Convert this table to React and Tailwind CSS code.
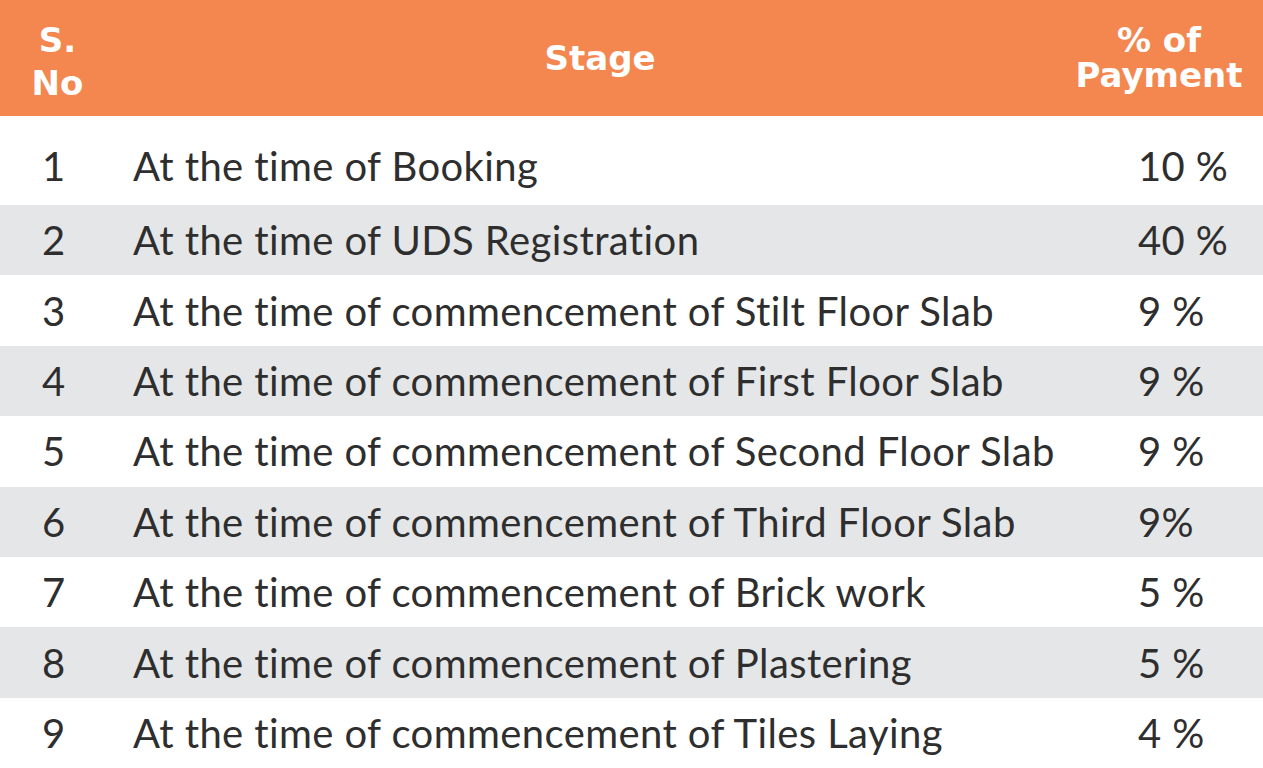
import React from 'react';

const rows = [
    ['1', 'At the time of Booking', '10 %'],
    ['2', 'At the time of UDS Registration', '40 %'],
    ['3', 'At the time of commencement of Stilt Floor Slab', '9 %'],
    ['4', 'At the time of commencement of First Floor Slab', '9 %'],
    ['5', 'At the time of commencement of Second Floor Slab', '9 %'],
    ['6', 'At the time of commencement of Third Floor Slab', '9%'],
    ['7', 'At the time of commencement of Brick work', '5 %'],
    ['8', 'At the time of commencement of Plastering', '5 %'],
    ['9', 'At the time of commencement of Tiles Laying', '4 %'],
];

const PaymentSchedule = () => {
    return (
        <div className="w-[1263px] h-[768px] overflow-hidden bg-white font-['Lato',sans-serif] text-[#2e2e2e]">
            {/* header */}
            <div className="grid grid-cols-[115px_1fr_178px] h-[116px] bg-[#f4874f] text-white font-['DejaVu_Sans',sans-serif] font-bold text-[34px]">
                <div className="flex items-center justify-center text-center leading-[43px] pt-[8px]">S.<br />No</div>
                <div className="flex items-center justify-center">Stage</div>
                <div className="flex items-center justify-center text-center leading-[35px] pr-[30px]">% of<br />Payment</div>
            </div>

            {rows.map(([no, stage, pct], i) => (
                <div
                    key={no}
                    className={`grid grid-cols-[115px_1fr_178px] items-center text-[40px] leading-none tracking-[0.4px] ${i === 0 ? 'h-[89px] pt-[10px]' : 'h-[70.4px]'} ${i % 2 === 1 ? 'bg-[#e5e6e8]' : 'bg-white'}`}
                >
                    <div className="pl-[42px]">{no}</div>
                    <div className="pl-[18px] whitespace-nowrap">{stage}</div>
                    <div className="pl-[53px] whitespace-nowrap">{pct}</div>
                </div>
            ))}
        </div>
    );
};

export default PaymentSchedule;
